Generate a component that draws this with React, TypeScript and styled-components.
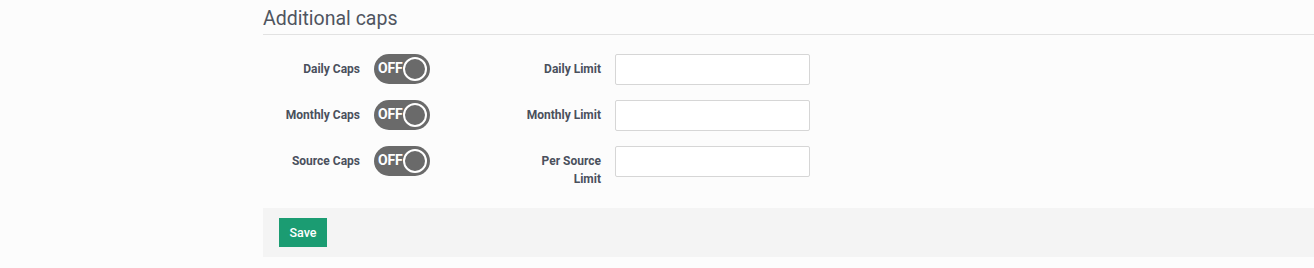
import React from "react";
import styled, { createGlobalStyle } from "styled-components";

const Global = createGlobalStyle`
  html, body { margin: 0; padding: 0; background: #fcfcfc; }
  body { font-family: Roboto, "Liberation Sans", Arial, sans-serif; }
  * { box-sizing: border-box; }
`;

const Page = styled.div`
  padding-left: 263px;
  padding-top: 6px;
  width: 1314px;
`;

const Heading = styled.h3`
  margin: 0;
  font-size: 19.5px;
  font-weight: 400;
  line-height: 26px;
  color: #4f5560;
  padding-bottom: 2px;
  border-bottom: 1px solid #e2e2e2;
`;

const Form = styled.div`
  display: flex;
  flex-direction: column;
  gap: 15px;
  padding-top: 19px;
  padding-bottom: 31px;
`;

const Row = styled.div`
  display: flex;
  align-items: flex-start;
  height: 31px;
`;

const Label = styled.label<{ $w: number; $textMax?: number }>`
  width: ${(p) => p.$w}px;
  flex: none;
  display: flex;
  justify-content: flex-end;
  text-align: right;
  font-size: 12px;
  font-weight: 700;
  color: #4a505c;
  line-height: 18px;
  padding-top: 6px;
  padding-right: 14px;
  & > span {
    max-width: ${(p) => (p.$textMax ? `${p.$textMax}px` : "none")};
  }
`;

const Toggle = styled.div`
  width: 56px;
  height: 30px;
  border-radius: 15px;
  background: #6a6a6a;
  display: flex;
  align-items: center;
  justify-content: space-between;
  padding: 0 3px 0 4px;
  flex: none;
`;

const ToggleText = styled.span`
  color: #fff;
  font-weight: 700;
  font-size: 14px;
  letter-spacing: -0.2px;
  margin-top: -2px;
`;

const Knob = styled.span`
  width: 24px;
  height: 24px;
  border-radius: 50%;
  border: 2px solid #fff;
  background: #6a6a6a;
`;

const Input = styled.input`
  width: 195px;
  height: 31px;
  border: 1px solid #d6d6d6;
  border-radius: 2px;
  background: #fff;
  outline: none;
  flex: none;
`;

const Footer = styled.div`
  background: #f4f4f4;
  height: 49px;
  padding: 10px 16px;
`;

const SaveButton = styled.button`
  background: #1b9c72;
  color: #fff;
  border: none;
  height: 29px;
  width: 48px;
  font-family: Roboto, "Liberation Sans", Arial, sans-serif;
  font-size: 12.5px;
  font-weight: 500;
  padding: 0;
`;

const rows = [
  { cap: "Daily Caps", limit: "Daily Limit" },
  { cap: "Monthly Caps", limit: "Monthly Limit" },
  { cap: "Source Caps", limit: "Per Source Limit" },
];

export default function App() {
  return (
    <>
      <Global />
      <Page>
        <Heading>Additional caps</Heading>
        <Form>
          {rows.map((r) => (
            <Row key={r.cap}>
              <Label $w={111}>
                <span>{r.cap}</span>
              </Label>
              <Toggle>
                <ToggleText>OFF</ToggleText>
                <Knob />
              </Toggle>
              <Label $w={185} $textMax={85}>
                <span>{r.limit}</span>
              </Label>
              <Input type="text" />
            </Row>
          ))}
        </Form>
        <Footer>
          <SaveButton>Save</SaveButton>
        </Footer>
      </Page>
    </>
  );
}
